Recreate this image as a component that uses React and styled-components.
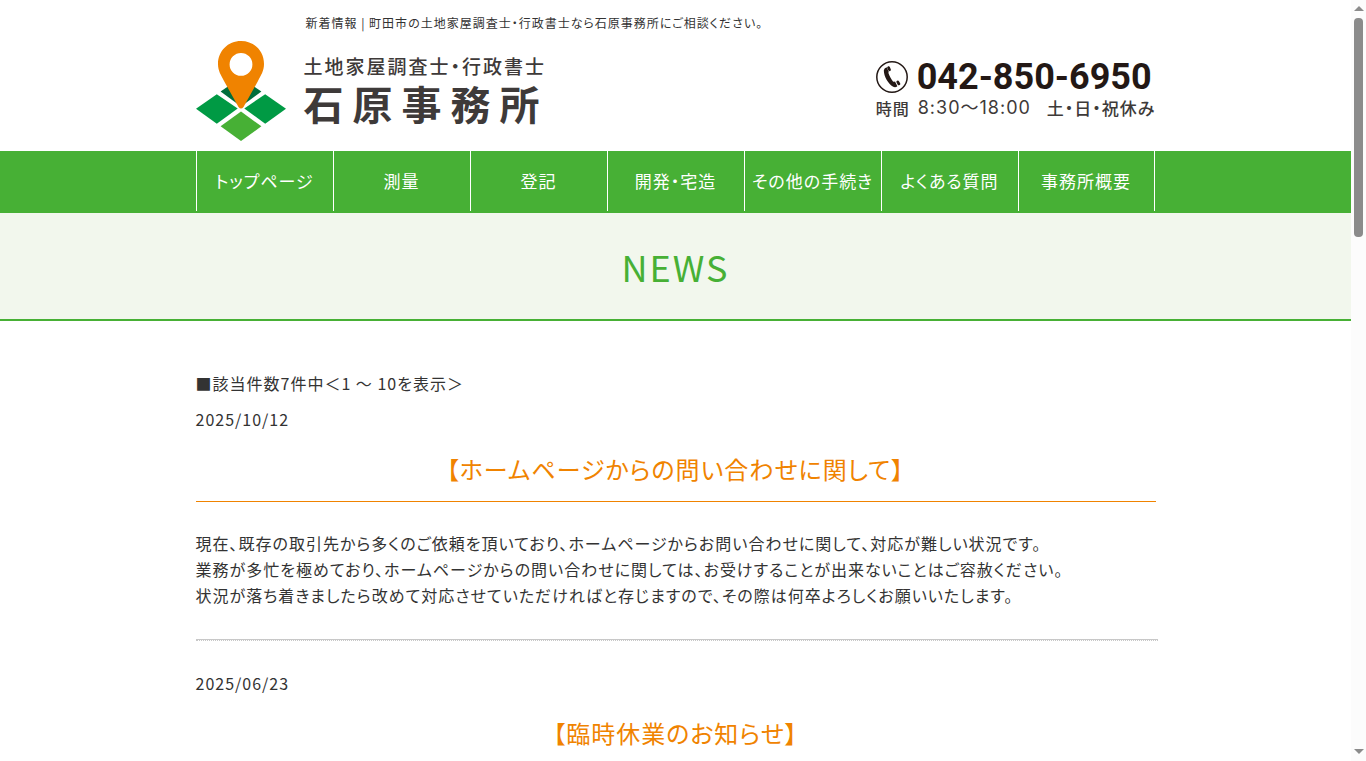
import React from "react";
import styled, { createGlobalStyle } from "styled-components";

const GlobalStyle = createGlobalStyle`
  * { box-sizing: border-box; }
  body {
    margin: 0;
    background: #fff;
    color: #333;
    font-family: "Noto Sans CJK JP", sans-serif;
    font-size: 16px;
    line-height: 26px;
    letter-spacing: 1px;
    font-feature-settings: "palt";
  }
  h1, h2, h3, p, ul { margin: 0; padding: 0; font-weight: 400; }
`;

const Viewport = styled.div`
  display: flex;
  height: 100vh;
  overflow: hidden;
`;

const Page = styled.div`
  flex: 1;
  min-width: 0;
  height: 100%;
  overflow: hidden;
`;

const Container = styled.div`
  max-width: 960px;
  margin: 0 auto;
`;

const HeaderInner = styled(Container)`
  padding: 12px 0 10px;
`;

const Tagline = styled.h1`
  padding-left: 110px;
  font-size: 12px;
  line-height: 22px;
`;

const Brand = styled.div`
  display: flex;
  justify-content: space-between;
  align-items: flex-start;
  padding-top: 7px;
`;

const LogoLink = styled.a`
  display: flex;
  gap: 18px;
  color: #3e3a39;
  text-decoration: none;
`;

const LogoText = styled.span`
  display: flex;
  flex-direction: column;
  padding-top: 12px;
`;

const LogoSub = styled.span`
  font-size: 19px;
  font-weight: 500;
  line-height: 26px;
  letter-spacing: 2px;
`;

const LogoName = styled.span`
  font-size: 40px;
  font-weight: 700;
  line-height: 48px;
  letter-spacing: 9px;
`;

const Contact = styled.div`
  padding-top: 17px;
  color: #231815;
`;

const Phone = styled.a`
  display: flex;
  align-items: center;
  gap: 8px;
  height: 38px;
  color: inherit;
  text-decoration: none;
  font: 700 36px/38px Roboto, sans-serif;
  letter-spacing: 0;
`;

const Hours = styled.p`
  display: flex;
  gap: 8px;
  color: #3e3a39;
  font-weight: 500;
  line-height: 24px;
`;

const HoursTime = styled.span`
  font-family: Inter, "Noto Sans CJK JP", sans-serif;
  font-size: 18px;
  font-weight: 400;
`;

const Closed = styled.span`
  padding-left: 8px;
  font-size: 17px;
`;

const Nav = styled.nav`
  background: #47b035;
  padding-bottom: 2px;
`;

const NavList = styled.ul`
  display: flex;
  list-style: none;
`;

const NavItem = styled.li`
  flex: 0 1 137px;
  border-left: 1px solid #fff;
  &:last-child { border-right: 1px solid #fff; }
`;

const NavLink = styled.a`
  display: block;
  color: #fff;
  font-size: 17px;
  line-height: 60px;
  text-align: center;
  text-decoration: none;
  white-space: nowrap;
`;

const Hero = styled.div`
  background: #f2f7ed;
  border-bottom: 2px solid #47b035;
`;

const HeroTitle = styled.h2`
  color: #47b035;
  font-size: 36px;
  line-height: 106px;
  letter-spacing: 2px;
  text-align: center;
`;

const Main = styled(Container).attrs({ as: "main" })`
  padding-top: 49px;
`;

const Count = styled.p`
  margin-bottom: 10px;
`;

const Title = styled.h3`
  margin: 18px 0 28px;
  padding-bottom: 13px;
  border-bottom: 1px solid #f08300;
  color: #f08300;
  font-size: 24px;
  line-height: 38px;
  text-align: center;
`;

const Divider = styled.hr`
  box-sizing: content-box;
  width: 100%;
  margin: 31px 0 29px;
  border: 1px solid #c8c8c8;
  border-bottom-style: dotted;
`;

const ScrollTrack = styled.div`
  display: flex;
  flex: 0 0 15px;
  flex-direction: column;
  align-items: center;
  justify-content: space-between;
  height: 100%;
  padding: 6px 0 7px;
  background: #fcfcfc;
`;

const ScrollThumb = styled.div`
  width: 9px;
  height: 219px;
  margin: 7px 0 auto;
  border-radius: 4px;
  background: #8b8b8b;
`;

const Logo = () => (
  <svg width="90" height="100" viewBox="0 0 90 100" aria-hidden="true">
    <path d="M24.6 50.6L45 36.5L65.4 50.6L45 65.5Z" fill="#006e3c" />
    <path d="M0 67.8L20.8 53.2L41.7 67.4L20.8 82.7Z" fill="#009a44" />
    <path d="M90 67.8L69.2 53.2L48.3 67.4L69.2 82.7Z" fill="#009a44" />
    <path d="M24.6 85.3L45 70.6L65.4 85.3L45 100Z" fill="#47b035" />
    <path
      fillRule="evenodd"
      d="M45 0C32 0 22 10 22 23C22 30 25 34 28 40L42.5 66Q45 69 47.5 66L62 40C65 34 68 30 68 23C68 10 58 0 45 0ZM45 12A11.4 11.4 0 1 1 45 34.8A11.4 11.4 0 1 1 45 12Z"
      fill="#f08300"
    />
  </svg>
);

const PhoneIcon = () => (
  <svg width="33" height="33" viewBox="0 0 33 33" aria-hidden="true">
    <circle cx="16" cy="16" r="15.2" fill="none" stroke="#231815" strokeWidth="1.5" />
    <g fill="#231815">
      <path d="M7.8 9.4Q8 7 10.6 6.2L12.8 10.8Q12.2 11.6 12.6 12.6C13.6 15.4 15 18 17 20.4Q18 21 19 20.6L21.4 25.2Q19.4 27 17.2 25.8C12 22.4 8 15.6 7.8 9.4Z" />
      <rect x="11.8" y="5.2" width="2.8" height="5" rx="1.3" transform="rotate(-24 13 8.1)" />
      <rect x="21" y="19.6" width="2.8" height="5" rx="1.3" transform="rotate(-30 22 22.1)" />
    </g>
  </svg>
);

const Arrow = ({ down }) => (
  <svg width="10" height="5" viewBox="0 0 10 5" aria-hidden="true">
    <path d={down ? "M0 0H10L5 5Z" : "M0 5H10L5 0Z"} fill="#8b8b8b" />
  </svg>
);

const navItems = ["トップページ", "測量", "登記", "開発・宅造", "その他の手続き", "よくある質問", "事務所概要"];

const articles = [
  {
    date: "2025/10/12",
    title: "【ホームページからの問い合わせに関して】",
    lines: [
      "現在、既存の取引先から多くのご依頼を頂いており、ホームページからお問い合わせに関して、対応が難しい状況です。",
      "業務が多忙を極めており、ホームページからの問い合わせに関しては、お受けすることが出来ないことはご容赦ください。",
      "状況が落ち着きましたら改めて対応させていただければと存じますので、その際は何卒よろしくお願いいたします。",
    ],
  },
  { date: "2025/06/23", title: "【臨時休業のお知らせ】", lines: [] },
];

export default function App() {
  return (
    <Viewport>
      <GlobalStyle />
      <Page>
        <header>
          <HeaderInner>
            <Tagline>新着情報 | 町田市の土地家屋調査士・行政書士なら石原事務所にご相談ください。</Tagline>
            <Brand>
              <LogoLink href="#">
                <Logo />
                <LogoText>
                  <LogoSub>土地家屋調査士・行政書士</LogoSub>
                  <LogoName>石原事務所</LogoName>
                </LogoText>
              </LogoLink>
              <Contact>
                <Phone href="tel:042-850-6950">
                  <PhoneIcon />
                  042-850-6950
                </Phone>
                <Hours>
                  <span>時間</span>
                  <HoursTime>8:30〜18:00</HoursTime>
                  <Closed>土・日・祝休み</Closed>
                </Hours>
              </Contact>
            </Brand>
          </HeaderInner>
          <Nav>
            <Container>
              <NavList>
                {navItems.map((label) => (
                  <NavItem key={label}>
                    <NavLink href="#">{label}</NavLink>
                  </NavItem>
                ))}
              </NavList>
            </Container>
          </Nav>
        </header>
        <Hero>
          <HeroTitle>NEWS</HeroTitle>
        </Hero>
        <Main>
          <Count>■該当件数7件中＜1 〜 10を表示＞</Count>
          {articles.map((article, index) => (
            <article key={article.date}>
              {index > 0 && <Divider />}
              <time>{article.date}</time>
              <Title>{article.title}</Title>
              {article.lines.map((line) => (
                <p key={line}>{line}</p>
              ))}
            </article>
          ))}
        </Main>
      </Page>
      <ScrollTrack aria-hidden="true">
        <Arrow />
        <ScrollThumb />
        <Arrow down />
      </ScrollTrack>
    </Viewport>
  );
}
